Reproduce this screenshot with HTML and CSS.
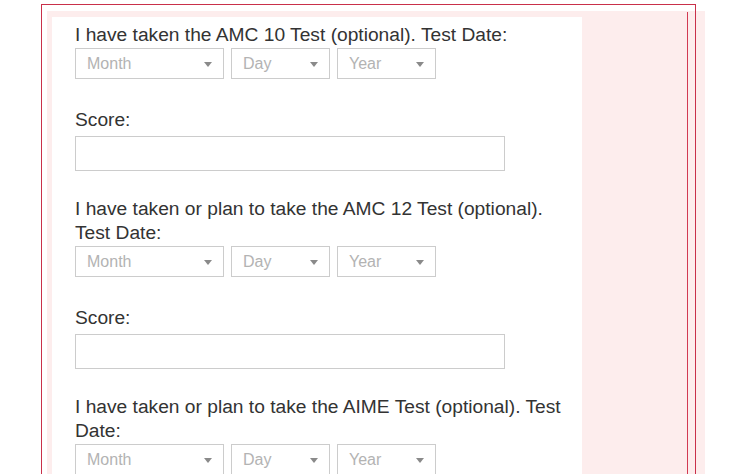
FILE: index.html
```html
<!DOCTYPE html>
<html>
<head>
<meta charset="utf-8">
<link rel="stylesheet" href="styles.css">
</head>
<body>
<div class="page">
  <div class="pink">
    <div class="panel">
      <div class="group">
        <p class="label">I have taken the AMC 10 Test (optional). Test Date:</p>
        <div class="dates">
          <div class="sel month">Month<span class="caret"></span></div>
          <div class="sel day">Day<span class="caret"></span></div>
          <div class="sel year">Year<span class="caret"></span></div>
        </div>
        <p class="label score-label">Score:</p>
        <div class="input"></div>
      </div>
      <div class="group">
        <p class="label">I have taken or plan to take the AMC 12 Test (optional).<br>Test Date:</p>
        <div class="dates">
          <div class="sel month">Month<span class="caret"></span></div>
          <div class="sel day">Day<span class="caret"></span></div>
          <div class="sel year">Year<span class="caret"></span></div>
        </div>
        <p class="label score-label">Score:</p>
        <div class="input"></div>
      </div>
      <div class="group">
        <p class="label">I have taken or plan to take the AIME Test (optional). Test<br>Date:</p>
        <div class="dates">
          <div class="sel month">Month<span class="caret"></span></div>
          <div class="sel day">Day<span class="caret"></span></div>
          <div class="sel year">Year<span class="caret"></span></div>
        </div>
      </div>
    </div>
  </div>
  <div class="frame"></div>
  <div class="rule"></div>
</div>
</body>
</html>
```
FILE: styles.css
```css
html, body {
  margin: 0;
  padding: 0;
  background: #ffffff;
  overflow: hidden;
}
body {
  font-family: "Liberation Sans", Arial, Helvetica, sans-serif;
  color: #333333;
}
.page {
  position: relative;
  height: 474px;
  padding: 11px 0 0 47px;
  box-sizing: border-box;
}
.pink {
  width: 658px;
  height: 463px;
  background: #fdeded;
  padding: 6px 0 0 5px;
  box-sizing: border-box;
}
.panel {
  width: 530px;
  height: 100%;
  background: #ffffff;
  padding: 6px 0 0 23px;
  box-sizing: border-box;
}
.group {
  margin-bottom: 26px;
}
.label {
  margin: 0;
  font-size: 19.2px;
  line-height: 24px;
  color: #333;
}
.dates {
  display: flex;
  gap: 7px;
  margin-top: 1px;
}
.sel {
  position: relative;
  height: 31px;
  box-sizing: border-box;
  border: 1px solid #cccccc;
  font-size: 16px;
  line-height: 29px;
  color: #b3b3b3;
  padding-left: 11px;
  background: #fff;
}
.month { width: 149px; }
.day { width: 99px; }
.year { width: 99px; }
.caret {
  position: absolute;
  right: 11px;
  top: 13px;
  width: 0;
  height: 0;
  border-left: 4px solid transparent;
  border-right: 4px solid transparent;
  border-top: 5px solid #8a8a8a;
}
.score-label {
  margin-top: 29px;
}
.input {
  width: 430px;
  height: 35px;
  box-sizing: border-box;
  border: 1px solid #cccccc;
  margin-top: 4px;
  background: #fff;
}
.frame {
  position: absolute;
  left: 41px;
  top: 4px;
  width: 655px;
  height: 480px;
  box-sizing: border-box;
  border: 1px solid #c9304a;
  border-bottom: none;
}
.rule {
  position: absolute;
  left: 687px;
  top: 12px;
  bottom: 0;
  width: 1px;
  background: #d23a52;
}
```
